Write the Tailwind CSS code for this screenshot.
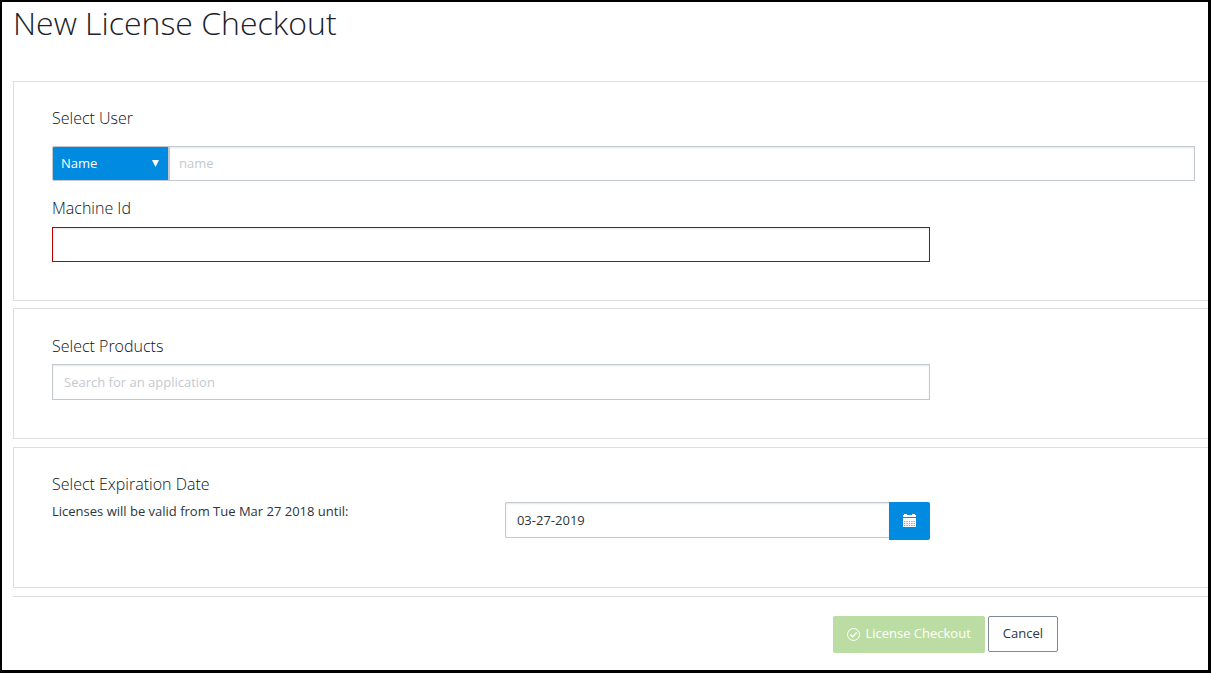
<!DOCTYPE html>
<html lang="en">
<head>
<meta charset="utf-8">
<meta name="viewport" content="width=device-width, initial-scale=1">
<title>New License Checkout</title>
<script src="https://cdn.jsdelivr.net/npm/@tailwindcss/browser@4"></script>
</head>
<body class="min-h-screen border-2 border-r-3 border-b-3 border-black bg-white pl-[11px] font-['Open_Sans',sans-serif] text-[13px] text-[#2c3540]">
<form>
  <h1 class="mb-[38px] text-[32px] leading-[41px] font-light text-[#1a222c]">New License Checkout</h1>

  <section class="mb-[7px] border border-r-0 border-[#dcdee0] pt-6 pr-[13px] pb-[38px] pl-[38px]">
    <label for="user" class="mb-4 block text-base leading-6 font-light text-[#0c131c]">Select User</label>
    <div class="mb-[15px] flex h-[35px]">
      <div class="relative w-[117px] shrink-0">
        <select aria-label="Search by" class="h-full w-full appearance-none rounded-l-xs border border-[#c4c9ce] bg-[#008be1] pt-px pl-2 text-white">
          <option>Name</option>
          <option>Email</option>
        </select>
        <svg class="pointer-events-none absolute top-[14px] right-[10px] h-[7px] w-[7px]" viewBox="0 0 7 7" fill="white"><path d="M0 0h7L3.500 7z"/></svg>
      </div>
      <input id="user" type="text" placeholder="name" class="min-w-0 flex-1 border border-[#c4c9ce] px-[9px] pt-px shadow-[inset_0_1px_2px_#0000001a] placeholder:text-[#c4c9cf]">
    </div>
    <label for="machine" class="mb-[7px] block text-base leading-6 font-light text-[#0c131c]">Machine Id</label>
    <input id="machine" type="text" class="block h-[35px] w-[76.8%] border border-[#b80000] px-[10px] shadow-[inset_0_1px_2px_#0000001a]">
  </section>

  <section class="mb-2 border border-r-0 border-[#dcdee0] pt-[25px] pr-[13px] pb-[38px] pl-[38px]">
    <label for="products" class="mb-[6px] block text-base leading-6 font-light text-[#0c131c]">Select Products</label>
    <input id="products" type="text" placeholder="Search for an application" class="block h-9 w-[76.8%] border border-[#c4c9ce] px-[11px] shadow-[inset_0_1px_2px_#0000001a] placeholder:text-[#c4c9cf]">
  </section>

  <section class="mb-2 border border-r-0 border-[#dcdee0] pt-6 pr-[13px] pb-[47px] pl-[38px]">
    <h2 class="text-base leading-6 font-light text-[#0c131c]">Select Expiration Date</h2>
    <div class="flex w-[76.8%] items-start pt-[6px]">
      <label for="until" class="w-[51.6%] shrink-0 leading-[18px]">Licenses will be valid from Tue Mar 27 2018 until:</label>
      <div class="flex min-w-0 flex-1 items-start">
        <input id="until" type="text" value="03-27-2019" class="h-9 min-w-0 flex-1 rounded-l-xs border border-r-0 border-[#c4c9ce] px-[11px] shadow-[inset_0_1px_2px_#0000001a]">
        <button type="button" aria-label="Open calendar" class="flex h-[38px] w-[41px] shrink-0 items-center justify-center rounded-r-xs bg-[#008be1] pb-px">
          <svg class="h-[13px] w-[13px]" viewBox="0 0 13 13" fill="white"><path d="M0 1h1V0h3v1h5V0h3v1h1v2H0zM0 4h13v9H0z"/><path d="M1 7.500h11M1 9.500h11M1 11.500h11" stroke="#008be1" stroke-opacity=".65" stroke-width="1" stroke-dasharray="1.400 1" fill="none"/></svg>
        </button>
      </div>
    </div>
  </section>

  <footer class="flex items-start justify-end gap-[3px] border-t border-[#dcdee0] pt-[19px] pr-[150px]">
    <button type="submit" disabled class="flex h-[37px] items-center gap-[5px] rounded-xs bg-[#bbdda3] px-[14px] pb-[2px] text-white">
      <svg class="mt-[2px] h-[13px] w-[13px]" viewBox="0 0 13 13" fill="none" stroke="white"><circle cx="6.500" cy="6.500" r="6"/><path d="M3.400 6.500l2.300 2.300 4-4.200" stroke-width="1.400"/></svg>
      <span class="font-medium">License Checkout</span>
    </button>
    <button type="button" class="h-9 rounded-xs border border-[#7d8a96] px-[14px]">Cancel</button>
  </footer>
</form>
</body>
</html>
